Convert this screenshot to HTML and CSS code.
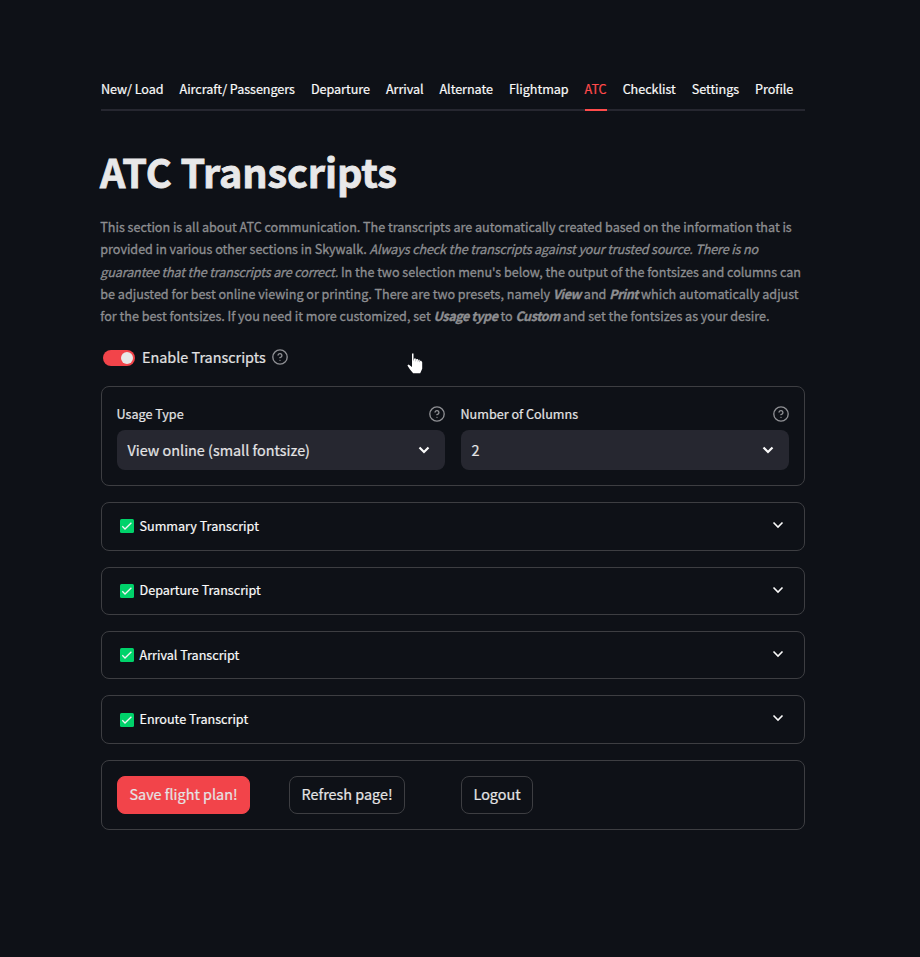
FILE: index.html
```html
<!DOCTYPE html>
<html lang="en">
<head>
<meta charset="utf-8">
<title>ATC Transcripts</title>
<link rel="stylesheet" href="styles.css">
</head>
<body>
<svg class="defs" width="0" height="0">
  <symbol id="help" viewBox="0 0 24 24"><circle cx="12" cy="12" r="10.800"/><path d="M9.09 9a3 3 0 0 1 5.83 1c0 2-3 3-3 3"/><path d="M12 17h.01"/></symbol>
  <symbol id="chevron" viewBox="0 0 12 8"><path d="M1.5 1.5 6 6l4.500-4.500"/></symbol>
  <symbol id="check" viewBox="0 0 14 14"><rect width="14" height="14" rx="1.500" fill="#00d26a"/><path d="m2.300 7.300 2.700 2.700 6.400-6.300" fill="none" stroke="#f4f4f4" stroke-width="1.300"/></symbol>
</svg>
<main class="page">
  <nav class="tabs">
    <a class="tab">New/ Load</a><a class="tab">Aircraft/ Passengers</a><a class="tab">Departure</a><a class="tab">Arrival</a><a class="tab">Alternate</a><a class="tab">Flightmap</a><a class="tab active">ATC</a><a class="tab">Checklist</a><a class="tab">Settings</a><a class="tab">Profile</a>
  </nav>
  <h1 class="title">ATC Transcripts</h1>
  <p class="intro">
    This section is all about ATC communication. The transcripts are automatically created based on the information that is<br>
    provided in various other sections in Skywalk. <em>Always check the transcripts against your trusted source. There is no</em><br>
    <em>guarantee that the transcripts are correct.</em> In the two selection menu's below, the output of the fontsizes and columns can<br>
    be adjusted for best online viewing or printing. There are two presets, namely <b>View</b> and <b>Print</b> which automatically adjust<br>
    for the best fontsizes. If you need it more customized, set <b>Usage type</b> to <b>Custom</b> and set the fontsizes as your desire.
  </p>
  <div class="toggle-row">
    <i class="toggle"></i><span class="toggle-label">Enable Transcripts</span><svg class="help"><use href="#help"/></svg>
    <svg class="pointer" viewBox="0 0 16 22"><path d="M5 .5h1.500v8l.6-3h1.700v3.500l.5-3h1.600v3.300l.5-2.500h1.300v2.700l.5-1.800h1l1 1.500v6.500l-2 4.500h-7L3 16.500.4 12.500l1.200-.9L5 14z"/></svg>
  </div>
  <section class="box fields">
    <div class="field"><div class="label"><span>Usage Type</span><svg class="help"><use href="#help"/></svg></div><div class="select"><span>View online (small fontsize)</span><svg class="chev bold"><use href="#chevron"/></svg></div></div>
    <div class="field"><div class="label"><span>Number of Columns</span><svg class="help"><use href="#help"/></svg></div><div class="select"><span>2</span><svg class="chev bold"><use href="#chevron"/></svg></div></div>
  </section>
  <section class="box expander"><svg class="check"><use href="#check"/></svg><span>Summary Transcript</span><svg class="chev"><use href="#chevron"/></svg></section>
  <section class="box expander"><svg class="check"><use href="#check"/></svg><span>Departure Transcript</span><svg class="chev"><use href="#chevron"/></svg></section>
  <section class="box expander"><svg class="check"><use href="#check"/></svg><span>Arrival Transcript</span><svg class="chev"><use href="#chevron"/></svg></section>
  <section class="box expander"><svg class="check"><use href="#check"/></svg><span>Enroute Transcript</span><svg class="chev"><use href="#chevron"/></svg></section>
  <section class="box actions">
    <div><button class="btn primary">Save flight plan!</button></div><div><button class="btn">Refresh page!</button></div><div><button class="btn">Logout</button></div>
  </section>
</main>
</body>
</html>
```
FILE: styles.css
```css
* { box-sizing: border-box; }
body { margin: 0; min-height: 957px; background: #0e1117; color: #fafafa; font-family: "Noto Sans CJK SC", sans-serif; font-size: 12.6px; overflow: hidden; -webkit-text-stroke: 0.2px currentColor; }
.defs { position: absolute; }
.page { width: 704px; margin-left: 101px; padding-top: 69px; }
.tabs { display: flex; gap: 16px; height: 42px; border-bottom: 2px solid #262730; letter-spacing: -0.04px; }
.tab { height: 42px; line-height: 40px; white-space: nowrap; border-bottom: 2px solid transparent; }
.tab.active { color: #ff4b4b; border-color: #ff4b4b; }
.title { margin: 36px 0 0 -1px; height: 52px; line-height: 47px; font-size: 39.6px; font-weight: 700; letter-spacing: -0.1px; color: #e8e8e9; white-space: nowrap; -webkit-text-stroke-width: 0.8px; }
.intro { margin: 17px 0 0 -0.700px; font-size: 12.6px; line-height: 22.300px; letter-spacing: -0.02px; color: #8d8e91; white-space: nowrap; -webkit-text-stroke-width: 0.3px; }
.intro em { letter-spacing: -0.14px; }
.intro b { font-style: italic; letter-spacing: -0.42px; }
.toggle-row { position: relative; display: flex; align-items: center; height: 24px; margin-top: 18.800px; padding-left: 2px; }
.toggle { width: 32px; height: 16px; padding: 2px; border-radius: 8px; background: #f2444a; }
.toggle::after { content: ""; display: block; width: 12px; height: 12px; margin-left: 16px; border-radius: 50%; background: #e8e8e8; }
.toggle-label { margin: 0 6px 3px 7px; font-size: 14.4px; color: #e2e2e3; }
.toggle-row .help { margin-bottom: 2px; }
.help { width: 16px; height: 16px; fill: none; stroke: #8f9094; stroke-width: 2; stroke-linecap: round; }
.pointer { position: absolute; left: 306px; top: 7px; width: 16px; height: 22px; fill: #fff; }
.box { border: 1px solid #3d3e42; border-radius: 8px; margin-bottom: 16px; }
.fields { display: grid; grid-template-columns: 1fr 1fr; gap: 16px; height: 100px; margin-top: 16px; padding: 15px; }
.label { display: flex; align-items: center; justify-content: space-between; height: 24px; margin-bottom: 4px; color: #e4e4e5; }
.label span, .select span, .expander span { margin: 0 0 2px -0.500px; }
.select { display: flex; align-items: center; justify-content: space-between; height: 40px; padding: 0 15px 0 11px; border-radius: 8px; background: #262730; font-size: 14.4px; color: #e5e5e6; }
.chev { width: 12px; height: 8px; fill: none; stroke: #fafafa; stroke-width: 1.600; }
.chev.bold { stroke-width: 2.200; }
.expander { display: flex; align-items: center; height: 48.360px; padding: 0 20px 0 18px; }
.expander .chev { margin: 0 0 2.500px auto; }
.check { width: 14px; height: 14px; margin: 0 6px 0 0; }
.actions { display: grid; grid-template-columns: 156px 156px 156px; gap: 16px; height: 70px; padding: 15px; }
.btn { height: 38px; padding: 0 11.500px 3px; border: 1px solid #3d3e42; border-radius: 8px; background: transparent; color: #e5e5e6; font: 14.4px "Noto Sans CJK SC", sans-serif; -webkit-text-stroke: 0.2px currentColor; }
.btn.primary { background: #f2444a; border-color: #f2444a; }
```
